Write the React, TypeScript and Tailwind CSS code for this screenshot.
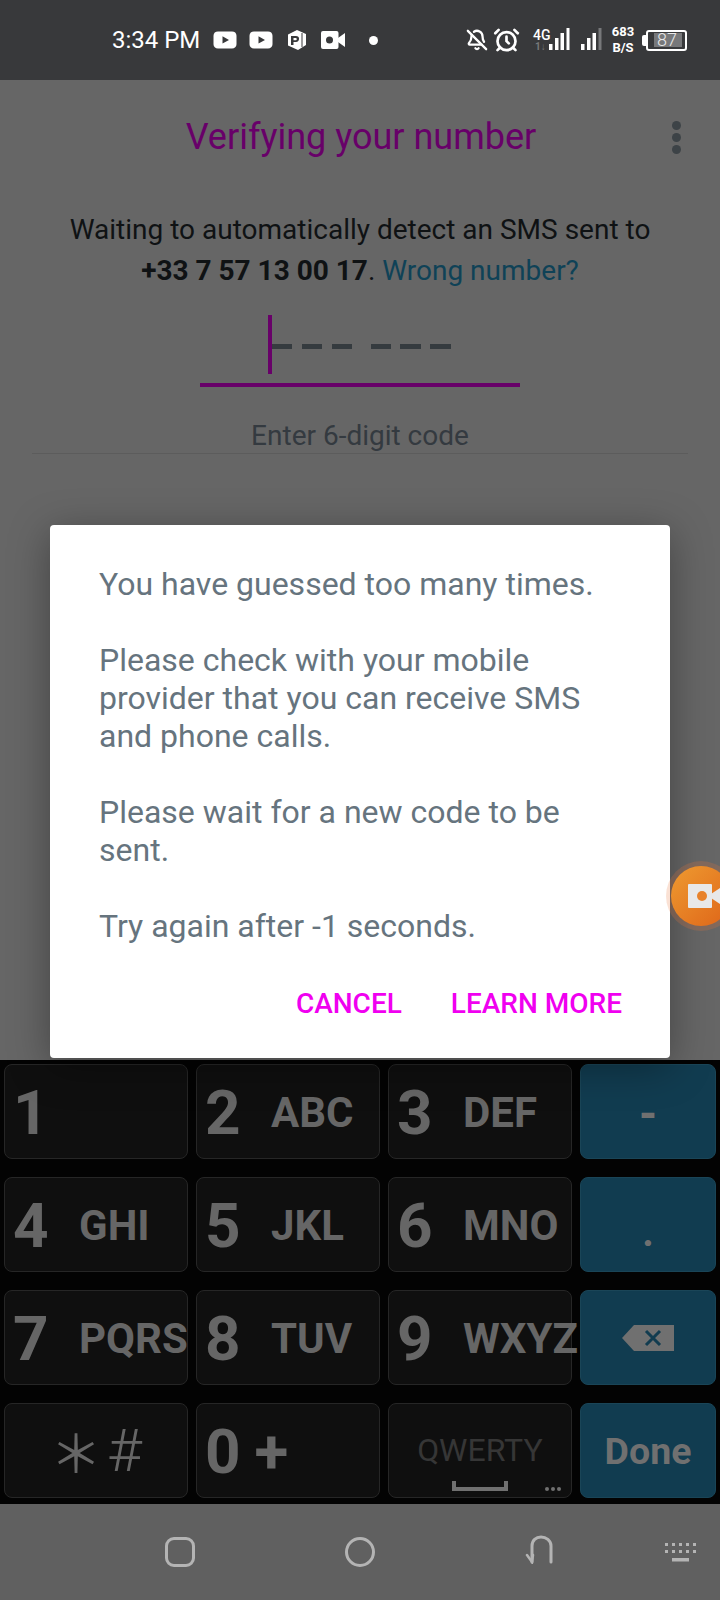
import { AlarmClock, BellOff } from "lucide-react"

function PlayBadge({ className }: { className?: string }) {
  return (
    <svg className={className} width="24" height="18" viewBox="0 0 24 18">
      <path
        fillRule="evenodd"
        fill="#fff"
        d="M5 .5h14c2.6 0 4.5 1.6 4.5 4.2v8.6c0 2.6-1.9 4.2-4.5 4.2H5C2.400 17.500.5 15.900.5 13.300V4.700C.5 2.100 2.400.5 5 .5ZM9.500 5.200v7.400L16 8.900Z"
      />
    </svg>
  )
}

function ParkIcon({ className }: { className?: string }) {
  return (
    <svg className={className} width="20" height="20" viewBox="0 0 20 20">
      <path
        fillRule="evenodd"
        fill="#fff"
        d="M1 4.500 10 0l9 4v11l-8 5-10-4.500ZM4 6v9h2.500v-3H9c2 0 3-1.500 3-3V8.500C12 7 11 6 9 6Zm2.500 2H8.800c.6 0 .9.300.9.800v.6c0 .5-.3.800-.9.800H6.500Z"
      />
      <rect x="14.500" y="3" width="1" height="14" fill="#38393b" />
    </svg>
  )
}

function CamIcon({ hole, className }: { hole: string; className?: string }) {
  return (
    <svg className={className} width="24" height="18" viewBox="0 0 24 18">
      <rect x="0" y="0" width="17.500" height="18" rx="2" fill="#fff" />
      <path d="M17 7 24 2v14l-7-5Z" fill="#fff" />
      <circle cx="8.500" cy="9" r="3.500" fill={hole} />
    </svg>
  )
}

function Signal({ last, className }: { last: string; className?: string }) {
  return (
    <svg className={className} width="21" height="22" viewBox="0 0 21 22">
      <rect x="0" y="16" width="3.500" height="6" fill="#fff" />
      <rect x="6" y="10" width="3.500" height="12" fill="#fff" />
      <rect x="11.500" y="5" width="3.500" height="17" fill="#fff" />
      <rect x="17.500" y="0" width="3" height="22" fill={last} />
    </svg>
  )
}

function StatusBar() {
  return (
    <div className="flex h-[80px] items-center bg-[#38393b] pl-[112px] font-[Roboto,sans-serif] text-white">
      <span className="w-[101px] text-[24px] whitespace-nowrap">3:34 PM</span>
      <PlayBadge />
      <PlayBadge className="ml-[12px]" />
      <ParkIcon className="ml-[14px]" />
      <CamIcon hole="#38393b" className="ml-[14px]" />
      <div className="ml-[24px] h-[9px] w-[9px] rounded-full bg-white" />
      <BellOff className="ml-[88px] h-[24px] w-[22px] text-white" strokeWidth={2.5} />
      <AlarmClock className="ml-[5px] h-[28px] w-[27px] text-white" strokeWidth={2.4} />
      <div className="ml-[13px] flex h-[24px] w-[18px] flex-col">
        <span className="text-[14px] leading-[14px] font-medium">4G</span>
        <span className="pl-[2px] text-[10px] leading-[10px] font-bold text-[#77787a]">1↓</span>
      </div>
      <Signal last="#fff" className="mt-[-2px] ml-[-2px]" />
      <Signal last="#77787a" className="mt-[-2px] ml-[11px]" />
      <div className="ml-[10px] flex w-[22px] flex-col items-center text-[13px] leading-[16px] font-bold">
        <span>683</span>
        <span>B/S</span>
      </div>
      <div className="ml-[8px] h-[11px] w-[4px] rounded-l-[2px] bg-white" />
      <div className="flex h-[21px] w-[41px] items-center rounded-[3px] border-2 border-white pl-[6px]">
        <div className="h-[14px] w-[28px] bg-[#77787a] pl-[3px] text-[18px] leading-[14px] font-light text-[#e8e8e8]">87</div>
      </div>
    </div>
  )
}

function Verification() {
  return (
    <div className="pt-[37px] font-[Roboto,sans-serif]">
      <div className="grid grid-cols-[1fr_auto_1fr] items-center pr-[39px] pl-[41px]">
        <div />
        <h1 className="text-[36px] leading-[40px] text-[#680069]">Verifying your number</h1>
        <div className="flex flex-col gap-[3px] justify-self-end">
          <div className="h-[9px] w-[9px] rounded-full bg-[#3d4347]" />
          <div className="h-[9px] w-[9px] rounded-full bg-[#3d4347]" />
          <div className="h-[9px] w-[9px] rounded-full bg-[#3d4347]" />
        </div>
      </div>
      <p className="mt-[52px] text-center text-[28px] leading-[41px] text-[#0f1214]">
        Waiting to automatically detect an SMS sent to
        <br />
        <b className="font-bold">+33 7 57 13 00 17</b>. <span className="text-[#0f4257]">Wrong number?</span>
      </p>
      <div className="mt-[24px] ml-[200px] flex h-[72px] w-[320px] items-start border-b-4 border-[#680069] pl-[68px]">
        <div className="h-[59px] w-[4px] bg-[#680069]" />
        <div className="mt-[29px] flex h-[5px] items-center">
          <div className="h-[5px] w-[20px] bg-[#353b3f]" />
          <div className="ml-[10px] h-[5px] w-[20px] bg-[#353b3f]" />
          <div className="ml-[10px] h-[5px] w-[20px] bg-[#353b3f]" />
          <div className="ml-[19px] h-[5px] w-[20px] bg-[#353b3f]" />
          <div className="ml-[9px] h-[5px] w-[21px] bg-[#353b3f]" />
          <div className="ml-[9px] h-[5px] w-[21px] bg-[#353b3f]" />
        </div>
      </div>
      <div className="mx-[32px] mt-[31px] border-b border-[#5c5c5c] text-center text-[28px] leading-[35px] text-[#343a40]">
        Enter 6-digit code
      </div>
    </div>
  )
}

function Dialog() {
  return (
    <div className="absolute top-[445px] left-[50px] h-[533px] w-[620px] rounded-[4px] bg-white pt-[40px] pl-[49px] font-[Roboto,sans-serif] shadow-[0_8px_40px_rgba(0,0,0,0.35)]">
      <p className="text-[32px] leading-[38px] whitespace-nowrap text-[#66747e]">
        You have guessed too many times.
        <br />
        <br />
        Please check with your mobile
        <br />
        provider that you can receive SMS
        <br />
        and phone calls.
        <br />
        <br />
        Please wait for a new code to be
        <br />
        sent.
        <br />
        <br />
        Try again after -1 seconds.
      </p>
      <div className="mt-[40px] flex justify-end gap-[49px] pr-[48px] text-[28px] leading-[38px] font-medium text-[#f000f0]">
        <span>CANCEL</span>
        <span>LEARN MORE</span>
      </div>
    </div>
  )
}

function RecordBubble() {
  return (
    <div className="absolute top-[781px] left-[666px] flex h-[70px] w-[70px] items-center justify-center rounded-full bg-[rgba(230,120,60,0.22)]">
      <div className="flex h-[60px] w-[60px] items-center rounded-full bg-gradient-to-br from-[#ee9a30] to-[#de6418] pl-[17px]">
        <svg className="shrink-0" width="38" height="24" viewBox="0 0 38 24">
          <rect width="24" height="24" rx="1" fill="#e8e8e8" />
          <path d="M23 10 38 0v24L23 14Z" fill="#e8e8e8" />
          <circle cx="14" cy="12" r="5" fill="#e8822a" />
        </svg>
      </div>
    </div>
  )
}

function DigitKey({ digit, letters }: { digit: string; letters?: string }) {
  return (
    <div className="flex h-[95px] items-center rounded-[8px] border border-[#262626] bg-[#0f0f0f] pt-[3px] pl-[8px] font-[Roboto,sans-serif] font-bold whitespace-nowrap text-[#666]">
      <span className="w-[66px] shrink-0 text-[62px] leading-none">{digit}</span>
      {letters && <span className="text-[42px] leading-none">{letters}</span>}
    </div>
  )
}

function BlueKey({ children, className }: { children: React.ReactNode; className?: string }) {
  return (
    <div className={"flex h-[95px] items-center justify-center rounded-[8px] border border-[#1a4557] bg-[#113c50] font-[Roboto,sans-serif] font-bold text-[#707070] " + (className ?? "")}>
      {children}
    </div>
  )
}

function Keyboard() {
  return (
    <div className="grid h-[444px] grid-cols-[184px_184px_184px_136px] content-start gap-x-[8px] gap-y-[18px] bg-[#030303] pt-[4px] pl-[4px]">
      <DigitKey digit="1" />
      <DigitKey digit="2" letters="ABC" />
      <DigitKey digit="3" letters="DEF" />
      <BlueKey className="pt-[6px] text-[46px]">-</BlueKey>

      <DigitKey digit="4" letters="GHI" />
      <DigitKey digit="5" letters="JKL" />
      <DigitKey digit="6" letters="MNO" />
      <BlueKey className="pt-[16px] text-[40px]">.</BlueKey>

      <DigitKey digit="7" letters="PQRS" />
      <DigitKey digit="8" letters="TUV" />
      <DigitKey digit="9" letters="WXYZ" />
      <BlueKey>
        <svg width="52" height="26" viewBox="0 0 52 26">
          <path d="M12 0h40v26H12L0 13Z" fill="#707070" />
          <path d="M24 6 38 20M38 6 24 20" stroke="#113c50" strokeWidth="3" />
        </svg>
      </BlueKey>

      <div className="flex h-[95px] items-center justify-center gap-[5px] rounded-[8px] border border-[#262626] bg-[#0f0f0f] font-[Roboto,sans-serif] text-[#666]">
        <span className="font-['Noto_Sans_CJK_SC',sans-serif] text-[52px] leading-none">＊</span>
        <span className="text-[60px] leading-none font-light">#</span>
      </div>
      <div className="flex h-[95px] items-center rounded-[8px] border border-[#262626] bg-[#0f0f0f] pt-[3px] pl-[8px] font-[Roboto,sans-serif] text-[62px] leading-none font-bold text-[#666]">
        <span>0</span>
        <span className="ml-[14px]">+</span>
      </div>
      <div className="relative flex h-[95px] flex-col items-center rounded-[8px] border border-[#262626] bg-[#0f0f0f] pt-[30px] font-[Roboto,sans-serif]">
        <span className="text-[32px] leading-[32px] text-[#363636]">QWERTY</span>
        <div className="mt-[15px] h-[10px] w-[56px] border-x-[4px] border-b-[4px] border-[#707070]" />
        <div className="absolute right-[10px] bottom-[6px] flex gap-[2px]">
          <div className="h-[4px] w-[4px] rounded-full bg-[#707070]" />
          <div className="h-[4px] w-[4px] rounded-full bg-[#707070]" />
          <div className="h-[4px] w-[4px] rounded-full bg-[#707070]" />
        </div>
      </div>
      <BlueKey className="pt-[2px] text-[37.5px]">Done</BlueKey>
    </div>
  )
}

function NavBar() {
  return (
    <div className="flex h-[96px] items-center bg-[#606060] pl-[165px]">
      <div className="h-[30px] w-[30px] rounded-[9px] border-[3px] border-[#b4b4b4]" />
      <div className="ml-[150px] h-[30px] w-[30px] rounded-full border-[3px] border-[#b4b4b4]" />
      <svg className="mt-[-6px] ml-[150px]" width="30" height="30" viewBox="0 0 30 30" fill="none" stroke="#b4b4b4" strokeWidth="3">
        <path d="M7 28V12c0-5.500 4-9 9-9s10 3.500 10 9v16" strokeLinecap="round" />
        <path d="M2 21 7 28l1-7" strokeLinecap="round" strokeWidth="2.500" />
      </svg>
      <svg className="mt-[2px] ml-[110px]" width="31" height="20" viewBox="0 0 31 20" fill="#b4b4b4">
        <rect x="0" y="0" width="3" height="3" />
        <rect x="7" y="0" width="3" height="3" />
        <rect x="14" y="0" width="3" height="3" />
        <rect x="21" y="0" width="3" height="3" />
        <rect x="28" y="0" width="3" height="3" />
        <rect x="0" y="7" width="3" height="3" />
        <rect x="7" y="7" width="3" height="3" />
        <rect x="14" y="7" width="3" height="3" />
        <rect x="21" y="7" width="3" height="3" />
        <rect x="28" y="7" width="3" height="3" />
        <rect x="7" y="15" width="17" height="3.500" />
      </svg>
    </div>
  )
}

export default function App() {
  return (
    <div className="flex h-[1600px] w-[720px] flex-col overflow-hidden">
      <StatusBar />
      <div className="relative h-[980px] bg-[#666]">
        <Verification />
        <Dialog />
        <RecordBubble />
      </div>
      <Keyboard />
      <NavBar />
    </div>
  )
}
